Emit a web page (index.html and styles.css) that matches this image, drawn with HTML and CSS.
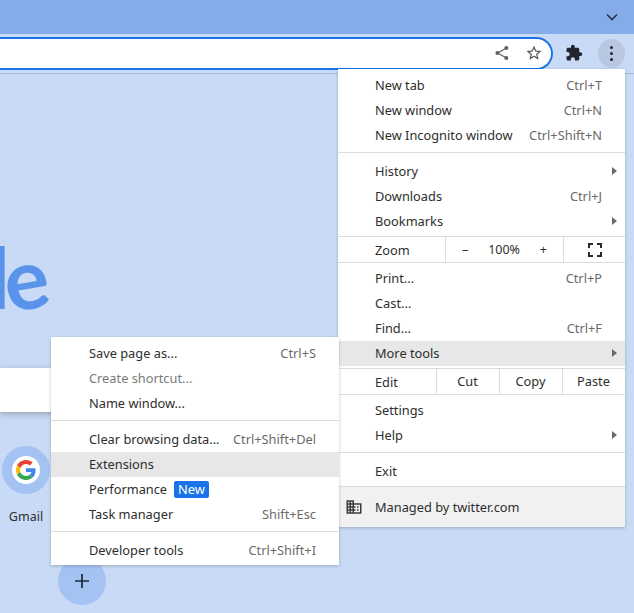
FILE: index.html
```html
<!DOCTYPE html>
<html lang="en">
<head>
    <meta charset="UTF-8">
    <title>New Tab</title>
    <link rel="stylesheet" href="styles.css">
</head>
<body>
    <div class="tabstrip">
        <svg class="chevron" width="12" height="8" viewBox="0 0 12 8"><path d="M1 1.5l5 5 5-5" fill="none" stroke="#2b3445" stroke-width="1.7"/></svg>
    </div>

    <div class="toolbar">
        <div class="omnibox">
            <svg class="share" width="14" height="16" viewBox="0 0 14 16"><path d="M11.5 3L2.5 8l9 5" fill="none" stroke="#5f5f5f" stroke-width="1.2"/><circle cx="11.3" cy="3" r="2" fill="#5f5f5f"/><circle cx="2.4" cy="8" r="2" fill="#5f5f5f"/><circle cx="11.3" cy="13" r="2" fill="#5f5f5f"/></svg>
            <svg class="star" width="18" height="18" viewBox="0 0 24 24"><path fill="#555" d="M22 9.24l-7.19-.62L12 2 9.19 8.63 2 9.24l5.46 4.73L5.82 21 12 17.27 18.18 21l-1.63-7.03L22 9.24zM12 15.4l-3.76 2.27 1-4.28-3.32-2.88 4.38-.38L12 6.1l1.71 4.04 4.38.38-3.32 2.88 1 4.28L12 15.4z"/></svg>
        </div>
        <svg class="puzzle" width="18" height="18" viewBox="0 0 24 24"><path fill="#202530" d="M20.5 11H19V7c0-1.1-.9-2-2-2h-4V3.5C13 2.12 11.88 1 10.5 1S8 2.12 8 3.5V5H4c-1.1 0-1.99.9-1.99 2v3.8H3.5c1.49 0 2.7 1.21 2.7 2.7s-1.21 2.7-2.7 2.7H2V20c0 1.1.9 2 2 2h3.8v-1.5c0-1.49 1.21-2.7 2.7-2.7 1.49 0 2.7 1.21 2.7 2.7V22H17c1.1 0 2-.9 2-2v-4h1.5c1.38 0 2.5-1.12 2.5-2.5S21.88 11 20.5 11z"/></svg>
        <div class="dots-btn"><span></span><span></span><span></span></div>
    </div>

    <main class="ntp">
        <div class="logo"><span class="logo-l">l</span><span class="logo-e">e</span></div>
        <div class="searchbox"></div>
        <div class="shortcuts">
            <div class="shortcut">
                <div class="tile">
                    <div class="favicon">
                        <svg width="20" height="20" viewBox="0 0 48 48"><path fill="#EA4335" d="M24 9.5c3.54 0 6.71 1.22 9.21 3.6l6.85-6.85C35.9 2.38 30.47 0 24 0 14.62 0 6.51 5.38 2.56 13.22l7.98 6.19C12.43 13.72 17.74 9.5 24 9.5z"/><path fill="#4285F4" d="M46.98 24.55c0-1.57-.15-3.09-.38-4.55H24v9.02h12.94c-.58 2.96-2.26 5.48-4.78 7.18l7.73 6c4.51-4.18 7.09-10.36 7.09-17.65z"/><path fill="#FBBC05" d="M10.53 28.59c-.48-1.45-.76-2.99-.76-4.59s.27-3.14.76-4.59l-7.98-6.19C.92 16.46 0 20.12 0 24c0 3.88.92 7.54 2.56 10.78l7.97-6.19z"/><path fill="#34A853" d="M24 48c6.48 0 11.93-2.13 15.89-5.81l-7.73-6c-2.15 1.45-4.92 2.3-8.16 2.3-6.26 0-11.57-4.22-13.47-9.91l-7.98 6.19C6.51 42.62 14.62 48 24 48z"/></svg>
                    </div>
                </div>
                <div class="shortcut-name">Gmail</div>
            </div>
            <div class="shortcut add">
                <div class="tile">
                    <svg width="16" height="16" viewBox="0 0 16 16"><path d="M8 1v14M1 8h14" stroke="#1f2937" stroke-width="1.7"/></svg>
                </div>
            </div>
        </div>
    </main>

    <!-- app menu -->
    <div class="menu app-menu">
        <div class="item first"><span>New tab</span><span class="keys">Ctrl+T</span></div>
        <div class="item"><span>New window</span><span class="keys">Ctrl+N</span></div>
        <div class="item"><span>New Incognito window</span><span class="keys">Ctrl+Shift+N</span></div>
        <hr class="sep">
        <div class="item sub"><span>History</span></div>
        <div class="item"><span>Downloads</span><span class="keys">Ctrl+J</span></div>
        <div class="item sub"><span>Bookmarks</span></div>
        <div class="split zoom-row">
            <div class="split-label">Zoom</div>
            <div class="zoom-ctrl"><span class="zoom-minus">&#8211;</span><span>100%</span><span class="zoom-plus">+</span></div>
            <div class="zoom-full">
                <svg width="14" height="14" viewBox="0 0 14 14"><path d="M1 5V1h4M9 1h4v4M13 9v4H9M5 13H1V9" fill="none" stroke="#2a2a2a" stroke-width="2"/></svg>
            </div>
        </div>
        <div class="item after-split"><span>Print...</span><span class="keys">Ctrl+P</span></div>
        <div class="item"><span>Cast...</span></div>
        <div class="item"><span>Find...</span><span class="keys">Ctrl+F</span></div>
        <div class="item sub active"><span>More tools</span></div>
        <div class="split edit-row">
            <div class="split-label">Edit</div>
            <div class="edit-btn">Cut</div>
            <div class="edit-btn">Copy</div>
            <div class="edit-btn">Paste</div>
        </div>
        <div class="item after-split"><span>Settings</span></div>
        <div class="item sub"><span>Help</span></div>
        <hr class="sep">
        <div class="item"><span>Exit</span></div>
        <div class="managed">
            <svg width="18" height="18" viewBox="0 0 24 24"><path fill="#3c3c3c" d="M12 7V3H2v18h20V7H12zM6 19H4v-2h2v2zm0-4H4v-2h2v2zm0-4H4V9h2v2zm0-4H4V5h2v2zm4 12H8v-2h2v2zm0-4H8v-2h2v2zm0-4H8V9h2v2zm0-4H8V5h2v2zm10 12h-8v-2h2v-2h-2v-2h2v-2h-2V9h8v10zm-2-8h-2v2h2v-2zm0 4h-2v2h2v-2z"/></svg>
            <span>Managed by twitter.com</span>
        </div>
    </div>

    <!-- more tools submenu -->
    <div class="menu tools-menu">
        <div class="item"><span>Save page as...</span><span class="keys">Ctrl+S</span></div>
        <div class="item disabled"><span>Create shortcut...</span></div>
        <div class="item"><span>Name window...</span></div>
        <hr class="sep">
        <div class="item"><span>Clear browsing data...</span><span class="keys">Ctrl+Shift+Del</span></div>
        <div class="item active"><span>Extensions</span></div>
        <div class="item"><span>Performance<b class="badge">New</b></span></div>
        <div class="item"><span>Task manager</span><span class="keys">Shift+Esc</span></div>
        <hr class="sep">
        <div class="item"><span>Developer tools</span><span class="keys">Ctrl+Shift+I</span></div>
    </div>
</body>
</html>
```

FILE: styles.css
```css
* {
    box-sizing: border-box;
}

html,
body {
    height: 100%;
}

body {
    margin: 0;
    overflow: hidden;
    background-color: #c8daf6;
    color: #2e2e2e;
    font-family: "Noto Sans", sans-serif;
    font-size: 12.8px;
}

/* browser chrome */

.tabstrip {
    display: flex;
    align-items: center;
    justify-content: flex-end;
    height: 34px;
    padding-right: 16px;
    background-color: #85acea;
}

.toolbar {
    display: flex;
    align-items: center;
    height: 40px;
    padding-bottom: 1px;
    border-bottom: 1px solid #a9b8d2;
}

.omnibox {
    display: flex;
    align-items: center;
    justify-content: flex-end;
    width: 553px;
    height: 33px;
    padding-right: 8px;
    background-color: #fff;
    border: 2px solid #1a73e8;
    border-left: 0;
    border-radius: 0 17px 17px 0;
}

.share {
    margin-right: 16px;
}

.puzzle {
    margin-left: 12px;
}

.dots-btn {
    display: flex;
    flex-direction: column;
    align-items: center;
    justify-content: center;
    gap: 3px;
    width: 27px;
    height: 29px;
    margin-left: 15px;
    background-color: #b9c8e0;
    border-radius: 50%;
}

.dots-btn span {
    width: 3px;
    height: 3px;
    background-color: #202530;
    border-radius: 50%;
}

/* new tab page */

.ntp {
    display: flex;
    flex-direction: column;
}

.logo {
    display: flex;
    height: 294px;
    margin-left: -11px;
    padding-top: 157px;
    color: #5a93ea;
    font-family: "Lato", sans-serif;
    font-size: 84px;
    font-weight: 700;
    line-height: 92px;
}

.logo-e {
    margin-left: -3px;
    transform: rotate(-10deg);
}

.searchbox {
    width: 80px;
    height: 44px;
    background-color: #fff;
    box-shadow: 0 2px 6px rgba(60, 64, 67, 0.35);
}

.shortcuts {
    display: grid;
    grid-template-columns: 56px 56px;
    grid-template-rows: 111px 48px;
    margin: 34px 0 0 -2px;
}

.shortcut {
    display: flex;
    flex-direction: column;
    align-items: center;
}

.shortcut.add {
    grid-column: 2;
    grid-row: 2;
}

.tile {
    display: flex;
    align-items: center;
    justify-content: center;
    flex: none;
    width: 48px;
    height: 48px;
    background-color: #a4c2f2;
    border-radius: 50%;
}

.favicon {
    display: flex;
    align-items: center;
    justify-content: center;
    width: 28px;
    height: 28px;
    background-color: #fff;
    border-radius: 50%;
}

.shortcut-name {
    margin-top: 14px;
    font-size: 12.5px;
    line-height: 18px;
}

/* menus */

.menu {
    position: absolute;
    background-color: #fff;
    box-shadow: 0 1px 3px rgba(60, 64, 67, 0.3);
}

.app-menu {
    top: 69px;
    left: 338px;
    width: 287px;
    height: 458px;
    padding-top: 4px;
}

.tools-menu {
    top: 337px;
    left: 51px;
    width: 288px;
    height: 228px;
    padding-top: 4px;
}

.item {
    position: relative;
    display: flex;
    align-items: center;
    justify-content: space-between;
    height: 25px;
    padding: 0 23px 2px 38px;
    white-space: nowrap;
}

.app-menu .item {
    padding-left: 37px;
}

.item.active {
    background-color: #e7e7e7;
}

.item.disabled {
    color: #7a7a7a;
}

.item.sub::after {
    content: "";
    position: absolute;
    top: 8px;
    right: 8px;
    border-left: 5px solid #6a6a6a;
    border-top: 4px solid transparent;
    border-bottom: 4px solid transparent;
}

.keys {
    color: #6a6a6a;
}

.sep {
    height: 1px;
    margin: 4px 0 6px;
    background-color: #dcdcdc;
    border: 0;
}

.badge {
    display: inline-block;
    height: 17px;
    margin-left: 7px;
    padding: 0 4px;
    background-color: #1a73e8;
    border-radius: 2px;
    color: #fff;
    font-weight: 400;
    line-height: 17px;
}

.split {
    display: flex;
    height: 27px;
    border-top: 1px solid #dcdcdc;
    border-bottom: 1px solid #dcdcdc;
}

.zoom-row {
    margin-top: 2px;
}

.edit-row {
    margin-top: 2px;
}

.after-split {
    margin-top: 3px;
}

.split-label {
    display: flex;
    align-items: center;
    padding-left: 37px;
}

.zoom-row .split-label {
    width: 107px;
    padding-top: 1px;
}

.edit-row .split-label {
    width: 98px;
    padding-top: 1px;
}

.zoom-ctrl {
    display: flex;
    align-items: center;
    justify-content: space-between;
    width: 119px;
    padding: 0 16px;
    border-left: 1px solid #dcdcdc;
    border-right: 1px solid #dcdcdc;
    font-size: 12.5px;
}

.zoom-full {
    display: flex;
    flex: 1;
    align-items: center;
    justify-content: center;
}

.edit-btn {
    display: flex;
    flex: 1;
    align-items: center;
    justify-content: center;
    padding: 0 1px 2px 0;
    border-left: 1px solid #dcdcdc;
}

.managed {
    display: flex;
    align-items: center;
    gap: 12px;
    height: 41px;
    margin-top: 2px;
    padding-left: 7px;
    background-color: #f1f1f1;
    border-top: 1px solid #dcdcdc;
}
```
